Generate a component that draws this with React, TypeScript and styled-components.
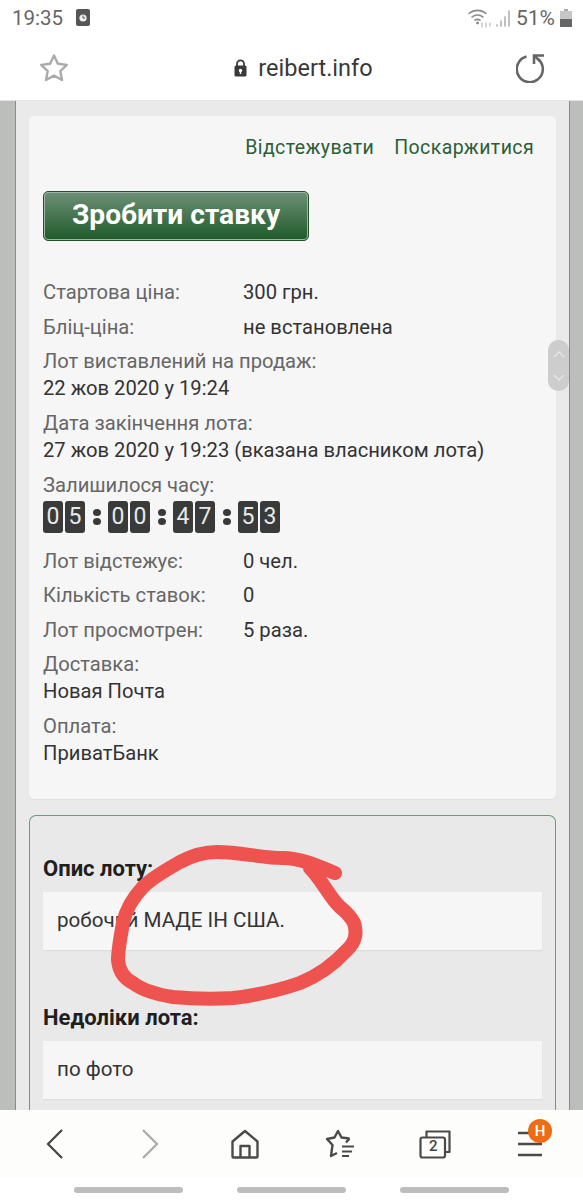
import React from 'react';
import styled, { createGlobalStyle } from 'styled-components';

const GlobalStyle = createGlobalStyle`
  html, body {
    margin: 0;
    padding: 0;
    background: #fff;
  }
  * {
    box-sizing: border-box;
  }
`;

const Screen = styled.div`
  position: relative;
  display: flex;
  flex-direction: column;
  width: 583px;
  height: 1200px;
  overflow: hidden;
  font-family: Roboto, "Noto Sans", sans-serif;
  color: #333;
`;

const StatusBar = styled.div`
  display: flex;
  align-items: center;
  justify-content: space-between;
  height: 35px;
  padding: 0 11px 0 12px;
  color: #666;
  font-size: 20.5px;
  background: #fff;
`;

const StatusGroup = styled.div`
  display: flex;
  align-items: center;
  gap: ${(p: { $gap: number }) => p.$gap}px;
`;

const Percent = styled.span`
  font-size: 21px;
`;

const UrlBar = styled.div`
  display: flex;
  align-items: center;
  justify-content: space-between;
  height: 66px;
  padding: 0 37px 0 39px;
  background: #fff;
  border-bottom: 1px solid #e4e4e4;
`;

const Address = styled.div`
  display: flex;
  align-items: center;
  gap: 11px;
  margin-left: 22px;
  font-size: 23.5px;
  color: #383838;
`;

const Page = styled.div`
  flex: 1;
  min-height: 0;
  overflow: hidden;
  background: #bcbebc;
  padding: 0 13px 0 15px;
`;

const Column = styled.div`
  height: 100%;
  background: #e9eae9;
  border-left: 1px solid #6f9a78;
  border-right: 1px solid #6f9a78;
  padding: 15px 13px 0 13px;
`;

const LotCard = styled.div`
  background: #f6f6f6;
  border-radius: 5px;
  padding: 19px 13px 0 14px;
  height: 683px;
  box-shadow: 0 1px 1px #dfdfdf;
`;

const LinkRow = styled.div`
  display: flex;
  justify-content: flex-end;
  gap: 20px;
  padding-right: 9px;
  font-size: 19.5px;
  letter-spacing: 0.4px;
  line-height: 26px;
  color: #2c5e35;
`;

const BidButton = styled.button`
  display: block;
  width: 266px;
  height: 50px;
  margin: 30px 0 38px;
  padding: 0 0 3px;
  border: 1px solid #24512c;
  border-radius: 5px;
  outline: 1px solid #9db5a2;
  outline-offset: -2px;
  background: linear-gradient(#6d9076, #1f5a29);
  color: #fff;
  font-family: inherit;
  font-size: 28.2px;
  font-weight: 700;
`;

const InfoRow = styled.div`
  display: flex;
  margin-bottom: 8px;
  line-height: 26.5px;
  font-size: 20.2px;
`;

const Label = styled.div`
  width: 200px;
  color: #666;
`;

const Value = styled.div`
  color: #333;
`;

const InfoBlock = styled.div`
  margin-bottom: 9px;
  line-height: 26.5px;
  font-size: 20.2px;
  color: #333;
`;

const BlockTitle = styled.div`
  color: #666;
  font-size: 20.2px;
  line-height: 26.5px;
`;

const Timer = styled.div`
  display: flex;
  align-items: center;
  height: 32px;
  margin: 2px 0 15px;
`;

const TimerGroup = styled.div`
  display: flex;
  gap: 2px;
`;

const Digit = styled.span`
  display: flex;
  align-items: center;
  justify-content: center;
  width: 20px;
  height: 32px;
  border-radius: 3px;
  background: #393a3a;
  color: #e8e8e8;
  font-size: 23px;
`;

const Colon = styled.span`
  display: flex;
  flex-direction: column;
  align-items: center;
  justify-content: center;
  gap: 2px;
  width: 23px;
  &::before,
  &::after {
    content: '';
    width: 8px;
    height: 7px;
    border-radius: 50%;
    background: #3a3a3a;
  }
`;

const DescCard = styled.div`
  height: 400px;
  margin-top: 16px;
  padding: 40px 13px 0 13px;
  background: #e9e9e9;
  border: 1px solid #6f9a78;
  border-bottom: none;
  border-radius: 7px 7px 0 0;
`;

const DescTitle = styled.div`
  font-size: 22px;
  font-weight: 700;
  line-height: 26px;
  color: #1f1f1f;
`;

const DescBox = styled.div`
  display: flex;
  align-items: center;
  height: 58px;
  margin: 10px 0 55px;
  padding: 0 14px 2px;
  background: #f6f6f6;
  box-shadow: 0 1px 1px #dcdcdc;
  font-size: 20.6px;
  color: #333;
`;

const BottomNav = styled.div`
  display: grid;
  grid-template-columns: repeat(6, 1fr);
  height: 68px;
  padding: 0 6px 0 8px;
  background: #fdfdfb;
`;

const NavSlot = styled.div`
  position: relative;
  display: flex;
  align-items: center;
  justify-content: center;
`;

const TabCount = styled.span`
  position: absolute;
  margin: 3px 0 0 -3px;
  font-size: 15px;
  font-weight: 500;
  color: #444;
`;

const Badge = styled.span`
  position: absolute;
  top: 9px;
  right: 25px;
  width: 24px;
  height: 24px;
  border-radius: 50%;
  background: #ee6c14;
  color: #fff;
  font-size: 15px;
  font-weight: 500;
  line-height: 24px;
  text-align: center;
`;

const GestureBar = styled.div`
  display: flex;
  justify-content: center;
  gap: 54px;
  height: 22px;
  padding-top: 9px;
  background: #fff;
`;

const Pill = styled.span`
  width: 109px;
  height: 6px;
  border-radius: 3px;
  background: #bdbdbd;
`;

const ScrollHandle = styled.div`
  position: absolute;
  left: 548px;
  top: 340px;
  width: 21px;
  height: 51px;
  display: flex;
  align-items: center;
  justify-content: center;
  border-radius: 10px;
  background: #cdcdcd;
`;

const Scribble = styled.svg`
  position: absolute;
  left: 0;
  top: 0;
  pointer-events: none;
`;

const CountdownGroup: React.FC<{ value: string }> = ({ value }) => (
  <TimerGroup>
    {value.split('').map((d, i) => (
      <Digit key={i}>{d}</Digit>
    ))}
  </TimerGroup>
);

const Star = () => (
  <svg width="30" height="30" viewBox="0 0 30 30" fill="none" stroke="#aaa" strokeWidth="2.4" strokeLinejoin="round">
    <path d="M15 2.5l3.9 8.2 8.9 1.2-6.5 6.2 1.7 8.9-8-4.4-8 4.4 1.7-8.9-6.5-6.2 8.9-1.2z" />
  </svg>
);

const Reload = () => (
  <svg width="30" height="30" viewBox="0 0 30 30" fill="none" stroke="#666" strokeWidth="2.6">
    <path d="M10.5 3.6A13 13 0 1 0 22.5 6.5" />
    <path d="M18 11V2.5H28" />
    <path d="M18 2.5L24 8" />
  </svg>
);

const Lock = () => (
  <svg width="13" height="18" viewBox="0 0 13 18">
    <path d="M3 7V4.8a3.5 3.5 0 0 1 7 0V7" fill="none" stroke="#3a3a3a" strokeWidth="1.8" />
    <rect x="0.5" y="6.5" width="12" height="11" rx="1.5" fill="#3a3a3a" />
    <circle cx="6.5" cy="11.5" r="1.7" fill="#fff" />
    <rect x="5.8" y="11.5" width="1.4" height="3.5" fill="#fff" />
  </svg>
);

const App: React.FC = () => {
  return (
    <>
      <GlobalStyle />
      <Screen>
        <StatusBar>
          <StatusGroup $gap={13}>
            <span>19:35</span>
            <svg width="14" height="17" viewBox="0 0 14 17">
              <rect width="14" height="17" rx="2" fill="#555" />
              <circle cx="7" cy="9" r="3.6" fill="#eee" />
              <path d="M7 9V6.5M7 9h2" stroke="#555" strokeWidth="1" />
            </svg>
          </StatusGroup>
          <StatusGroup $gap={5}>
            <svg width="43" height="20" viewBox="0 0 43 20" fill="none" stroke="#8a8a8a" strokeLinecap="round">
              <path d="M1 5.5a13 13 0 0 1 17 0" strokeWidth="1.6" />
              <path d="M4 9a8.5 8.5 0 0 1 11 0" strokeWidth="1.6" />
              <path d="M7 12.2a4.5 4.5 0 0 1 5 0" strokeWidth="1.6" />
              <circle cx="9.5" cy="15" r="1" fill="#8a8a8a" />
              <path d="M14 15v4M18 15v4M22 15v3" strokeWidth="1" stroke="#aaa" />
              <path d="M29 18v-1M33 18v-5M37 18v-9M41 18V3" strokeWidth="1.5" stroke="#aaa" />
            </svg>
            <Percent>51%</Percent>
            <svg width="12" height="18" viewBox="0 0 12 18">
              <rect x="4" y="0" width="4" height="2" fill="#aaa" />
              <rect x="0" y="2" width="12" height="8" fill="#c6c6c6" />
              <rect x="0" y="10" width="12" height="8" fill="#666" />
            </svg>
          </StatusGroup>
        </StatusBar>
        <UrlBar>
          <Star />
          <Address>
            <Lock />
            <span>reibert.info</span>
          </Address>
          <Reload />
        </UrlBar>
        <Page>
          <Column>
            <LotCard>
              <LinkRow>
                <span>Відстежувати</span>
                <span>Поскаржитися</span>
              </LinkRow>
              <BidButton>Зробити ставку</BidButton>
              <InfoRow>
                <Label>Стартова ціна:</Label>
                <Value>300 грн.</Value>
              </InfoRow>
              <InfoRow>
                <Label>Бліц-ціна:</Label>
                <Value>не встановлена</Value>
              </InfoRow>
              <InfoBlock>
                <BlockTitle>Лот виставлений на продаж:</BlockTitle>
                22 жов 2020 у 19:24
              </InfoBlock>
              <InfoBlock>
                <BlockTitle>Дата закінчення лота:</BlockTitle>
                27 жов 2020 у 19:23 (вказана власником лота)
              </InfoBlock>
              <BlockTitle>Залишилося часу:</BlockTitle>
              <Timer>
                <CountdownGroup value="05" />
                <Colon />
                <CountdownGroup value="00" />
                <Colon />
                <CountdownGroup value="47" />
                <Colon />
                <CountdownGroup value="53" />
              </Timer>
              <InfoRow>
                <Label>Лот відстежує:</Label>
                <Value>0 чел.</Value>
              </InfoRow>
              <InfoRow>
                <Label>Кількість ставок:</Label>
                <Value>0</Value>
              </InfoRow>
              <InfoRow>
                <Label>Лот просмотрен:</Label>
                <Value>5 раза.</Value>
              </InfoRow>
              <InfoBlock>
                <BlockTitle>Доставка:</BlockTitle>
                Новая Почта
              </InfoBlock>
              <InfoBlock>
                <BlockTitle>Оплата:</BlockTitle>
                ПриватБанк
              </InfoBlock>
            </LotCard>
            <DescCard>
              <DescTitle>Опис лоту:</DescTitle>
              <DescBox>робочий МАДЕ ІН США.</DescBox>
              <DescTitle>Недоліки лота:</DescTitle>
              <DescBox>по фото</DescBox>
            </DescCard>
          </Column>
        </Page>
        <BottomNav>
          <NavSlot>
            <svg width="18" height="30" viewBox="0 0 18 30" fill="none" stroke="#444" strokeWidth="2.2">
              <path d="M16 1L2 15l14 14" />
            </svg>
          </NavSlot>
          <NavSlot>
            <svg width="18" height="30" viewBox="0 0 18 30" fill="none" stroke="#aaa" strokeWidth="2.2">
              <path d="M2 1l14 14L2 29" />
            </svg>
          </NavSlot>
          <NavSlot>
            <svg width="30" height="30" viewBox="0 0 30 30" fill="none" stroke="#4a4a4a" strokeWidth="2.4" strokeLinejoin="round">
              <path d="M2.5 27.5V12.5L15 2l12.5 10.5V27.5a1 1 0 0 1-1 1H3.5a1 1 0 0 1-1-1z" />
              <path d="M10.5 28V17h9v11" />
            </svg>
          </NavSlot>
          <NavSlot>
            <svg width="30" height="30" viewBox="0 0 30 30" fill="none" stroke="#4a4a4a" strokeWidth="2.4" strokeLinejoin="round">
              <path d="M24.5 9.5L16.5 8.5 13 2 9.5 8.5 2 10l5.5 6-1.5 11 6-3" />
              <path d="M24.5 9.5l-3.5 4" />
              <path d="M17 17.5h12M17 22.5h10M17 27h7" strokeWidth="2" />
            </svg>
          </NavSlot>
          <NavSlot>
            <svg width="32" height="30" viewBox="0 0 32 30" fill="none" stroke="#4a4a4a" strokeWidth="2.2" strokeLinejoin="round">
              <path d="M7.5 8V2.5H30.5V23H26" />
              <rect x="1.5" y="8.5" width="24.5" height="20" rx="2" />
            </svg>
            <TabCount>2</TabCount>
          </NavSlot>
          <NavSlot>
            <svg width="26" height="26" viewBox="0 0 26 26" fill="none" stroke="#4a4a4a" strokeWidth="2.6">
              <path d="M1 2h24M1 13h24M1 24h24" />
            </svg>
            <Badge>H</Badge>
          </NavSlot>
        </BottomNav>
        <GestureBar>
          <Pill />
          <Pill />
          <Pill />
        </GestureBar>
        <ScrollHandle>
          <svg width="12" height="32" viewBox="0 0 12 32" fill="none" stroke="#e6e6e6" strokeWidth="1.4">
            <path d="M1 7l5-5 5 5M1 25l5 5 5-5" />
          </svg>
        </ScrollHandle>
        <Scribble width="583" height="1200" viewBox="0 0 583 1200">
          <path
            d="M335 873C318 866 300 858 283 858C262 858 240 852 217 852C205 852 193 855 180 862C166 870 153 877 143 887C131 900 126 910 123 923C120 940 118 950 118 960C119 972 125 979 133 983C145 992 160 995 173 997C195 999 215 999 233 998C258 995 280 990 300 983C320 975 335 963 347 950C356 942 357 932 354 923C350 915 345 911 340 907C330 898 322 880 310 868"
            fill="none"
            stroke="#ef5350"
            strokeWidth="14"
            strokeLinecap="round"
            strokeLinejoin="round"
          />
        </Scribble>
      </Screen>
    </>
  );
};

export default App;
